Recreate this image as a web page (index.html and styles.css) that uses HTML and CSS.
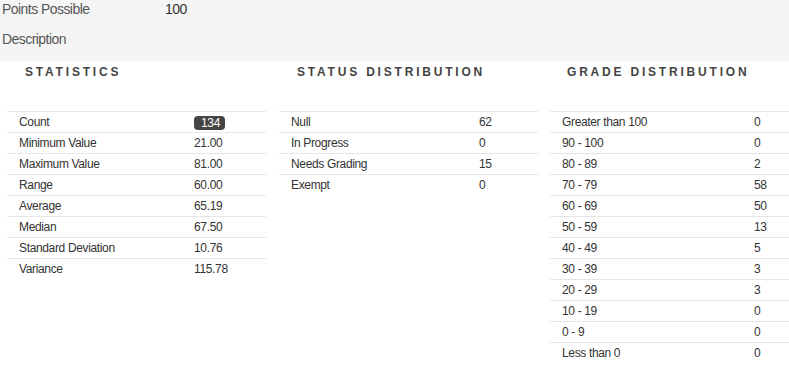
FILE: index.html
```html
<!DOCTYPE html>
<html>
<head>
<meta charset="utf-8">
<link rel="stylesheet" href="styles.css">
</head>
<body>
<div class="info">
  <div class="info-row"><span class="info-label">Points Possible</span><span class="info-value">100</span></div>
  <div class="info-row"><span class="info-label">Description</span></div>
</div>
<div class="panels">
  <section class="panel">
    <h2 class="panel-title">STATISTICS</h2>
    <table class="stats stats-a">
      <tr><td>Count</td><td><span class="badge">134</span></td></tr>
      <tr><td>Minimum Value</td><td>21.00</td></tr>
      <tr><td>Maximum Value</td><td>81.00</td></tr>
      <tr><td>Range</td><td>60.00</td></tr>
      <tr><td>Average</td><td>65.19</td></tr>
      <tr><td>Median</td><td>67.50</td></tr>
      <tr><td>Standard Deviation</td><td>10.76</td></tr>
      <tr><td>Variance</td><td>115.78</td></tr>
    </table>
  </section>
  <section class="panel">
    <h2 class="panel-title">STATUS DISTRIBUTION</h2>
    <table class="stats stats-b">
      <tr><td>Null</td><td>62</td></tr>
      <tr><td>In Progress</td><td>0</td></tr>
      <tr><td>Needs Grading</td><td>15</td></tr>
      <tr><td>Exempt</td><td>0</td></tr>
    </table>
  </section>
  <section class="panel">
    <h2 class="panel-title">GRADE DISTRIBUTION</h2>
    <table class="stats stats-c">
      <tr><td>Greater than 100</td><td>0</td></tr>
      <tr><td>90 - 100</td><td>0</td></tr>
      <tr><td>80 - 89</td><td>2</td></tr>
      <tr><td>70 - 79</td><td>58</td></tr>
      <tr><td>60 - 69</td><td>50</td></tr>
      <tr><td>50 - 59</td><td>13</td></tr>
      <tr><td>40 - 49</td><td>5</td></tr>
      <tr><td>30 - 39</td><td>3</td></tr>
      <tr><td>20 - 29</td><td>3</td></tr>
      <tr><td>10 - 19</td><td>0</td></tr>
      <tr><td>0 - 9</td><td>0</td></tr>
      <tr><td>Less than 0</td><td>0</td></tr>
    </table>
  </section>
</div>
</body>
</html>
```

FILE: styles.css
```css
html, body {
  margin: 0;
  padding: 0;
  overflow: hidden;
  background: #fff;
  font-family: "Liberation Sans", Arial, sans-serif;
  color: #333;
}

.info {
  background: #f5f5f5;
  height: 61px;
  padding-left: 2px;
  display: flex;
  flex-direction: column;
  gap: 10px;
}

.info-row {
  display: flex;
  height: 20px;
  line-height: 19px;
  font-size: 14px;
  letter-spacing: -0.55px;
  color: #555;
}

.info-label {
  width: 163px;
}

.info-value {
  color: #333;
}

.panels {
  display: flex;
  gap: 13px;
  padding-left: 7px;
}

.panel {
  flex: 0 0 259px;
}

.panel:last-child {
  flex: 0 0 259px;
  margin-left: -1px;
}

.panel-title {
  margin: 0;
  padding: 4px 0 0 18px;
  height: 50px;
  font-size: 12px;
  line-height: 14px;
  font-weight: bold;
  letter-spacing: 2.8px;
  color: #444;
  box-sizing: border-box;
  white-space: nowrap;
}

.panel:last-child .panel-title {
  padding-left: 17px;
}

.stats {
  width: 100%;
  border-collapse: collapse;
  font-size: 12px;
  letter-spacing: -0.35px;
  color: #333;
}

.stats td {
  border-top: 1px solid #e6e6e6;
  height: 20px;
  padding: 0 0 0 12px;
  line-height: 20px;
  vertical-align: middle;
}

.stats td + td {
  padding-left: 0;
}

.stats-a td:first-child { width: 175px; }
.stats-b td:first-child { width: 188px; }
.stats-c td:first-child { width: 192px; }

.badge {
  display: inline-block;
  background: #444;
  color: #fff;
  border-radius: 4px;
  padding: 0 5px 0 7px;
  height: 14px;
  line-height: 14px;
  vertical-align: middle;
}
```
